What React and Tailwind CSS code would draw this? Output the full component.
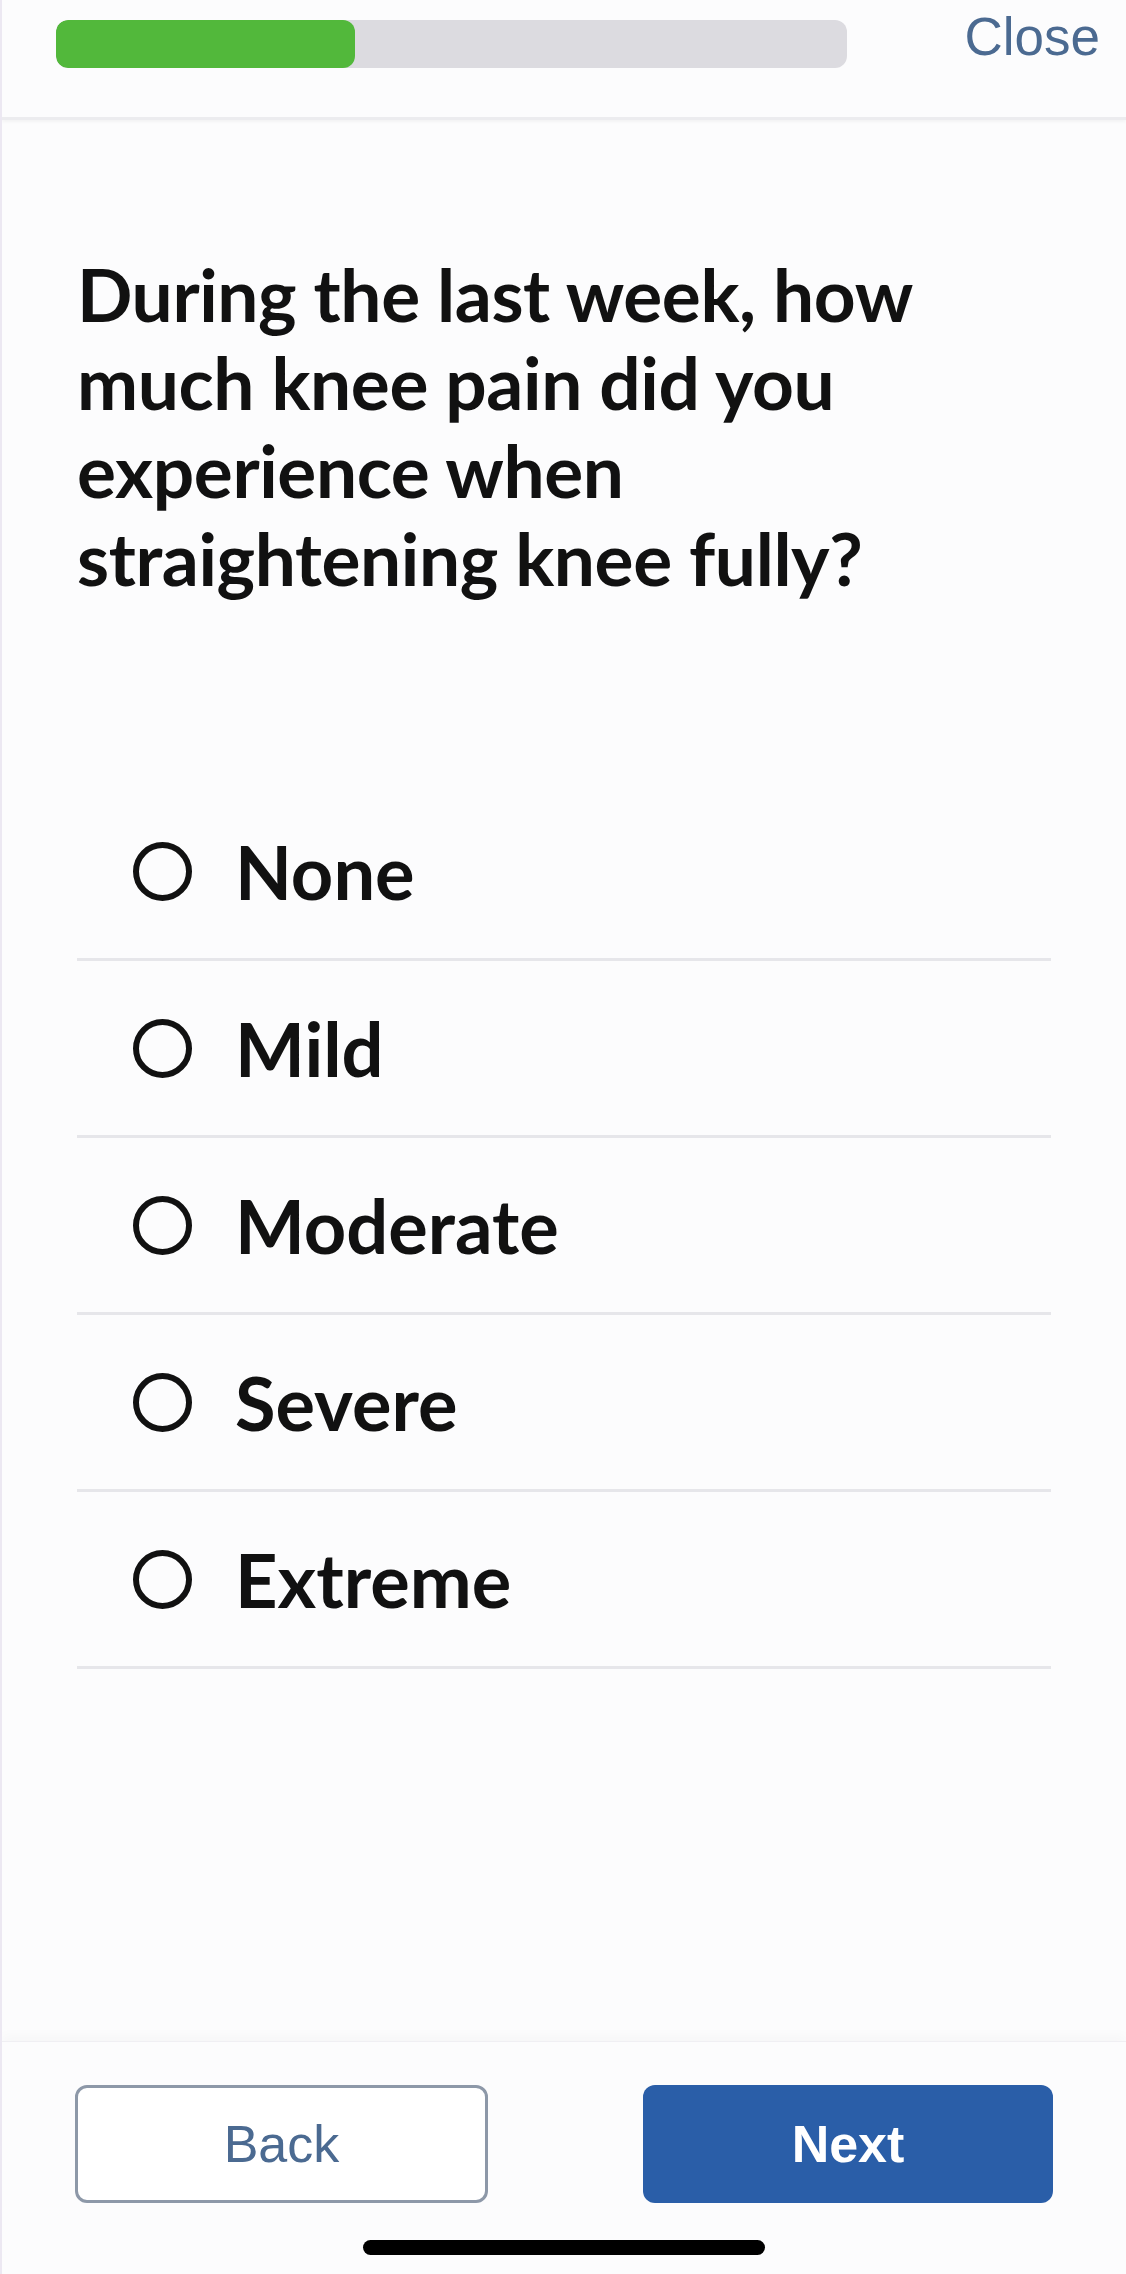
import React from 'react';

const options = ['None', 'Mild', 'Moderate', 'Severe', 'Extreme'];

export default function App() {
  return (
    <div className="h-[2274px] w-[1126px] flex flex-col bg-[#fcfcfd] border-l-2 border-[#ece8f2] overflow-hidden">
      {/* Header with progress */}
      <div className="h-[120px] flex items-start pt-[20px] border-b-[3px] border-[#ececef] shadow-[0_2px_3px_rgba(0,0,0,0.04)]">
        <div className="ml-[54px] w-[791px] h-[48px] rounded-[12px] bg-[#dcdbe0] overflow-hidden">
          <div className="h-full w-[299px] bg-[#52b83b] rounded-[12px]" />
        </div>
        <button className="ml-auto mr-[26px] mt-[-9px] text-[53px] leading-[52px] text-[#4b6a91] font-['Liberation_Sans',sans-serif]">
          Close
        </button>
      </div>

      {/* Question */}
      <div className="px-[75px] font-['Lato',sans-serif]">
        <h1 className="mt-[130px] text-[73px] leading-[88px] font-bold text-[#111] tracking-[-0.4px]">
          During the last week, how much knee pain did you experience when straightening knee fully?
        </h1>

        <ul className="mt-[182px]">
          {options.map((opt) => (
            <li key={opt} className="h-[177px] flex items-center border-b-[3px] border-[#e6e6ea]">
              <span className="ml-[56px] w-[59px] h-[59px] rounded-full border-[6px] border-[#111] shrink-0" />
              <span className="ml-[43px] text-[74px] font-bold text-[#111]">{opt}</span>
            </li>
          ))}
        </ul>
      </div>

      {/* Footer */}
      <div className="mt-auto border-t border-[#f0eff3] shadow-[0_-6px_10px_rgba(0,0,0,0.025)] pt-[43px] pb-[19px] flex flex-col items-center font-['Liberation_Sans',sans-serif]">
        <div className="w-full px-[73px] flex justify-between">
          <button className="w-[413px] h-[118px] rounded-[12px] border-[3px] border-[#8d98a8] bg-white text-[52px] text-[#4b6a91]">
            Back
          </button>
          <button className="w-[410px] h-[118px] rounded-[12px] bg-[#2a5ea8] text-[52px] font-bold text-white">
            Next
          </button>
        </div>
        <div className="mt-[37px] w-[402px] h-[15px] rounded-full bg-black" />
      </div>
    </div>
  );
}
